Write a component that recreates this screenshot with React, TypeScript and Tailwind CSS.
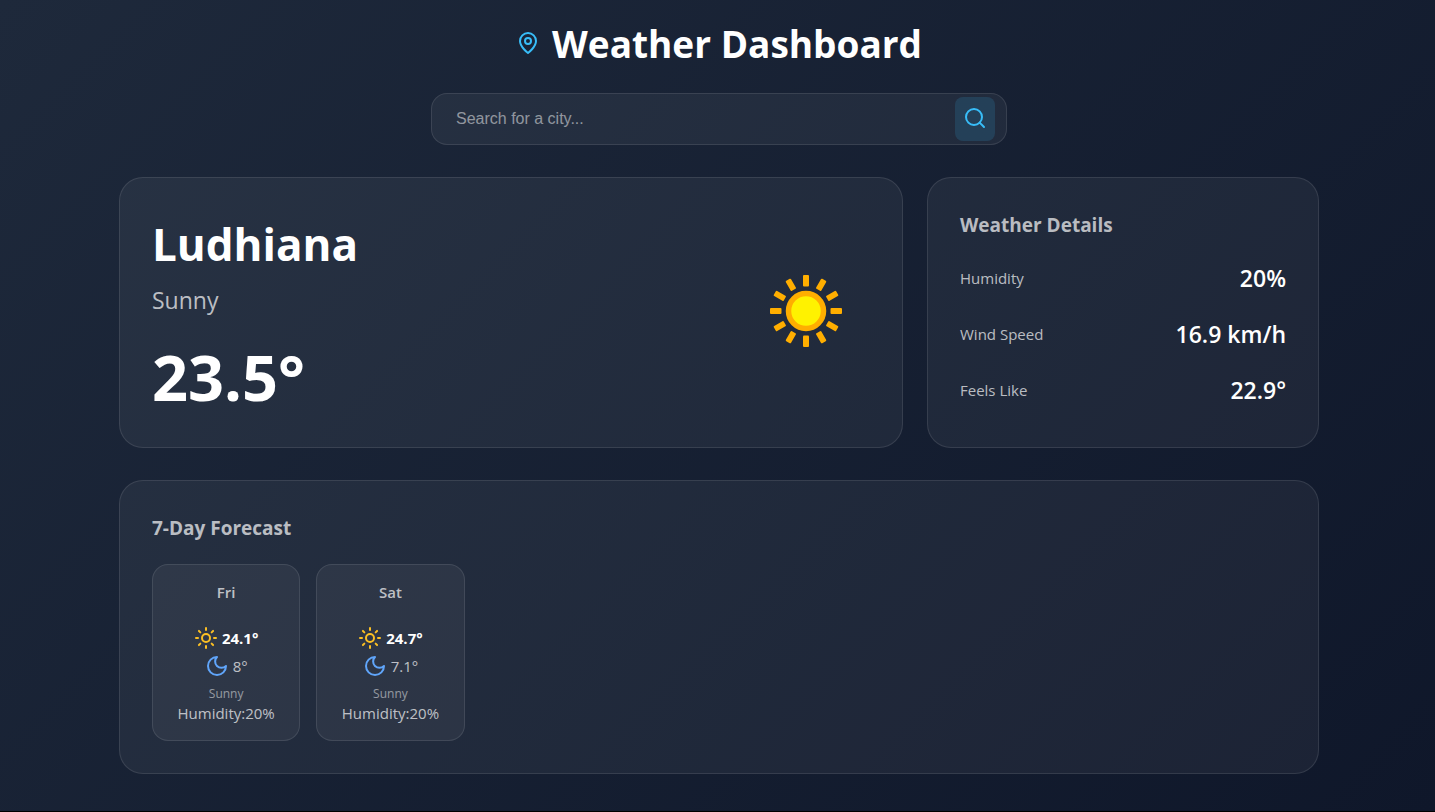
import { FormEvent, ReactNode, useState } from "react";
import { Search, Sun } from "lucide-react";

const details = [
  { label: "Humidity", value: "20%" },
  { label: "Wind Speed", value: "16.9 km/h" },
  { label: "Feels Like", value: "22.9°" },
];

const forecast = [
  { day: "Fri", high: "24.1°", low: "8°", condition: "Sunny", humidity: "20%" },
  { day: "Sat", high: "24.7°", low: "7.1°", condition: "Sunny", humidity: "20%" },
];

const rayAngles = [0, 30, 60, 90, 120, 150, 180, 210, 240, 270, 300, 330];

function LineIcon({ className, children }: { className: string; children: ReactNode }) {
  return (
    <svg
      viewBox="0 0 24 24"
      fill="none"
      stroke="currentColor"
      strokeWidth="2"
      strokeLinecap="round"
      strokeLinejoin="round"
      aria-hidden="true"
      className={className}
    >
      {children}
    </svg>
  );
}

function SunnyPicture() {
  return (
    <svg viewBox="0 0 128 128" className="size-32 shrink-0" role="img" aria-label="Sunny">
      {rayAngles.map((angle) => (
        <rect key={angle} x="61" y="26" width="6" height="11.5" rx="1" fill="#ffae00" transform={`rotate(${angle} 64 62)`} />
      ))}
      <circle cx="64" cy="62" r="17.5" fill="#fff200" stroke="#ffae00" strokeWidth="5.5" />
    </svg>
  );
}

function SearchBar() {
  const [city, setCity] = useState("");
  const submit = (event: FormEvent) => event.preventDefault();
  return (
    <form
      onSubmit={submit}
      className="mx-auto mt-6 flex h-13 w-full max-w-xl items-center rounded-2xl border border-white/10 bg-white/5 pr-[11px] pl-6"
    >
      <input
        type="text"
        aria-label="City"
        placeholder="Search for a city..."
        value={city}
        onChange={(event) => setCity(event.target.value)}
        className="min-w-0 flex-1 bg-transparent font-['Liberation_Sans',sans-serif] text-base text-white outline-none placeholder:text-white/50"
      />
      <button
        type="submit"
        aria-label="Search"
        className="flex h-11 w-10 items-center justify-center rounded-lg bg-[#38bdf8]/15 pb-0.5 text-[#38bdf8]"
      >
        <Search size={24} />
      </button>
    </form>
  );
}

export default function App() {
  return (
    <div className="min-h-screen border-b border-black bg-linear-135 from-[#1e293b] to-[#0f172a] pr-4 pb-8 pl-[19px] font-['Open_Sans','Noto_Sans',sans-serif] text-white">
      <main className="mx-auto max-w-[1200px]">
        <header className="pt-[18px]">
          <h1 className="flex items-start justify-center gap-3 text-[37px] leading-[51px] font-bold">
            <LineIcon className="mt-[13px] size-6 text-[#38bdf8]">
              <path d="M20 10c0 6-8 12-8 12s-8-6-8-12a8 8 0 0 1 16 0Z" />
              <circle cx="12" cy="10" r="3" />
            </LineIcon>
            Weather Dashboard
          </h1>
          <SearchBar />
        </header>

        <div className="mt-8 grid grid-cols-1 gap-6 md:grid-cols-[2fr_1fr]">
          <section className="flex items-center justify-between rounded-3xl border border-white/10 bg-white/5 p-8">
            <div>
              <h2 className="text-[44px] leading-[68px] font-bold">Ludhiana</h2>
              <p className="mt-1 text-[23px] leading-9 text-white/70">Sunny</p>
              <p className="mt-5 text-[63px] leading-[77px] font-bold">23.5°</p>
            </div>
            <SunnyPicture />
          </section>

          <section className="rounded-3xl border border-white/10 bg-white/5 p-8">
            <h2 className="text-[19px] leading-[30px] font-bold text-white/70">Weather Details</h2>
            <dl className="mt-[22px] flex flex-col gap-6">
              {details.map((item) => (
                <div key={item.label} className="flex items-center justify-between leading-8">
                  <dt className="text-[15px] text-white/70">{item.label}</dt>
                  <dd className="text-[23px] font-semibold">{item.value}</dd>
                </div>
              ))}
            </dl>
          </section>
        </div>

        <section className="mt-8 rounded-3xl border border-white/10 bg-white/5 p-8">
          <h2 className="text-[19px] leading-[30px] font-bold text-white/70">7-Day Forecast</h2>
          <ul className="mt-[21px] grid grid-cols-2 gap-4 md:grid-cols-7">
            {forecast.map((item) => (
              <li
                key={item.day}
                className="flex flex-col items-center rounded-2xl border border-white/10 bg-white/5 p-4 text-[15px] leading-[22px]"
              >
                <h3 className="font-semibold text-white/70">{item.day}</h3>
                <p className="mt-[21px] flex h-7 items-center gap-1 font-bold">
                  <Sun size={24} className="text-[#fbbf24]" />
                  {item.high}
                </p>
                <p className="flex h-7 items-center gap-1 text-white/70">
                  <LineIcon className="size-6 text-[#60a5fa]">
                    <path d="M12 3a6 6 0 0 0 9 9 9 9 0 1 1-9-9Z" />
                  </LineIcon>
                  {item.low}
                </p>
                <p className="mt-1.5 text-xs leading-4 text-white/50">{item.condition}</p>
                <p className="text-white/70">Humidity:{item.humidity}</p>
              </li>
            ))}
          </ul>
        </section>
      </main>
    </div>
  );
}
